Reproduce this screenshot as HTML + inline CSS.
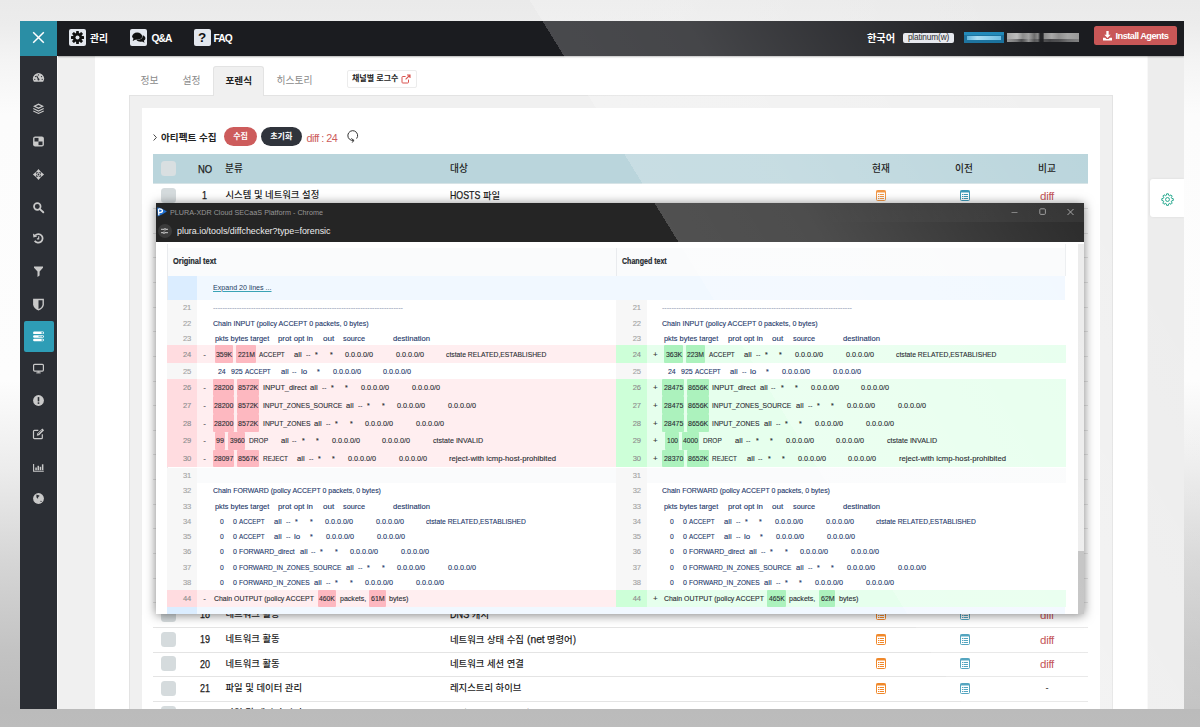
<!DOCTYPE html><html lang="ko"><head><meta charset="utf-8"><title>PLURA-XDR Cloud SECaaS Platform</title><style>
*{box-sizing:border-box;margin:0;padding:0}
html,body{width:1200px;height:727px;overflow:hidden}
body{position:relative;font-family:"Liberation Sans","Noto Sans CJK KR",sans-serif;color:#222;
 background:linear-gradient(180deg,#eaeaea 0px,#ececec 24px,#f4f4f4 60px,#fcfcfc 115px,#fdfdfd 380px,#ececec 470px,#d6d6d6 560px,#c3c3c3 650px,#bbbbbb 709px,#bcbcbc 727px);}
.l{letter-spacing:-1px;font-size:11.300px}
#app{position:absolute;left:20px;top:21px;width:1164px;height:688px;background:#fff;overflow:hidden}
#pg{position:absolute;left:-20px;top:-21px;width:1200px;height:727px}
#pg div,#pg span.a{position:absolute}
#pg span.a{transform-origin:0 50%;white-space:pre}
#pg span.a:not(.bg):not(.g):not(.hl),.row .c,.th,.tbt{z-index:10}
#gloss,#pgloss{z-index:5;left:0;top:0;width:1200px;height:727px;pointer-events:none;background:linear-gradient(58.4deg,rgba(255,255,255,0) 59.3%,rgba(255,255,255,.2) 59.3%,rgba(255,255,255,.185) 68%,rgba(255,255,255,.075) 80%,rgba(255,255,255,0) 89%)}
#gloss{position:absolute}
#pop{z-index:20}
#topbar{left:20px;top:21px;width:1164px;height:35px;background:#1b1c20;box-shadow:0 1px 1.500px rgba(0,0,0,.3)}
#teal{left:20px;top:21px;width:37px;height:35px;background:#2a8ea5}
#side{left:20px;top:56px;width:37px;height:653px;background:#2b2e34}
#strip{left:57px;top:56px;width:38px;height:653px;background:#f0f0f0}
#rstrip{left:1147px;top:56px;width:37px;height:653px;background:#ededed;border-left:1px solid #f8f8f8}
.tbi{top:29px;width:17px;height:17px;border-radius:2px;background:#e3e7ee}
.tbi svg{display:block;width:17px;height:17px}
.tbt{top:21px;height:35px;line-height:35px;color:#fff;font-weight:bold;font-size:9.8px;white-space:nowrap}
.si{left:32px;width:13px;height:13px}
.si svg{display:block;width:13px;height:13px}
#active{left:23.800px;top:321px;width:30.100px;height:30.800px;border-radius:2px;background:#2e9db6}
.tab{top:72.700px;height:16px;line-height:16px;font-size:9.8px;color:#8a8a8a;white-space:nowrap}
#tabact{left:213px;top:66px;width:51px;height:30px;background:#f0f0f0;border:1px solid #e3e3e3;border-bottom:none;border-radius:3px 3px 0 0}
#panel{left:129px;top:95px;width:984px;height:640px;background:#f0f0f0;border:1px solid #e3e3e3}
#inner{left:142px;top:108px;width:958px;height:620px;background:#fff}
#thead{left:153px;top:154px;width:935px;height:30.300px;background:#bad5dc;border-bottom:1px solid #d6e3e6}
.th{top:0;height:30px;line-height:30px;font-size:9.7px;color:#222;white-space:nowrap;font-weight:500}
.row{left:153px;width:935px;height:24.65px;border-bottom:1px solid #e4e4e4}
.row .c{top:0;height:23.6px;line-height:23.6px;font-size:9.35px;color:#1c1c1c;white-space:nowrap;font-weight:500}
.cb{left:8px;top:3.900px;width:15px;height:15px;border-radius:3.500px;background:#d5dbdd}
.di{top:5.600px;width:10px;height:11px}
.di svg{display:block}
.diff{color:#c4565a !important;top:.8px !important}

#pop{left:156px;top:203px;width:928px;height:410.7px;background:#fff;box-shadow:0 1px 10px rgba(0,0,0,.5);overflow:hidden}
#pin{left:-156px;top:-203px;width:1200px;height:727px}
#pbar{left:156px;top:203px;width:928px;height:38.7px;background:#252525}
.pt{white-space:nowrap;line-height:12px;height:12px}
#ptab{left:166.7px;top:247.5px;width:898.5px;height:400px;border-left:1px solid #e6e8eb}
#phead{left:166.7px;top:247.5px;width:898.5px;height:28.3px;background:#fafbfc}
#pexp{left:166.7px;top:275.8px;width:898.5px;height:23.9px;background:#f1f8ff}
.sd{left:0;top:0;width:0;height:0}
.r{left:0;width:1200px;font-size:8px;color:#24386a;white-space:pre;-webkit-text-stroke:.12px}
.r .a{top:.6px;height:100%}
.r .bg,.r .g,.r .hl{top:0 !important}
.r .bg{left:166.7px;width:449.4px}
.r .g{left:166.7px;width:30.6px;background:#f7f7f7}
.r .n{left:166.7px;width:24.2px;text-align:right;font-size:7.6px;color:#a3a3a3;letter-spacing:-.3px}
.r .mk{color:#333;font-size:8px}
.r.del,.r.add{color:#2a2d33}
.r.del .bg{background:#ffeef0}.r.del .g{background:#ffdce0}.r.del .hl{background:#fdb8c0}
.r.add .bg{background:#e6ffed}.r.add .g{background:#cdffd8}.r.add .hl{background:#acf2bd}
.r.emp .bg{background:#fafbfc}
.r.del .n,.r.add .n{color:#8d8d8d}
.hl{border-radius:1px}
</style></head><body>
<div id="app"><div id="pg">
<div id="strip"></div><div id="rstrip"></div>
<div id="panel"></div><div id="inner"></div><div id="tabact"></div>
<div class="tab" style="left:140.5px">정보</div>
<div class="tab" style="left:182.5px">설정</div>
<div class="tab" style="left:225.5px;color:#222;font-weight:bold;font-size:9.6px">포렌식</div>
<div class="tab" style="left:276.5px">히스토리</div>
<div style="left:347px;top:70px;width:70px;height:18px;border:1px solid #ececec;border-radius:2px;background:#fff"></div>
<div style="left:352px;top:70px;height:18px;line-height:18px;font-size:8px;font-weight:bold;color:#222;white-space:nowrap">채널별 로그수</div>
<div style="left:401px;top:74px;width:10px;height:10px"><svg viewBox="0 0 10 10" width="10" height="10" style="display:block"><path d="M7.5 5.6V8.2a.8.8 0 0 1-.8.8H1.8a.8.8 0 0 1-.8-.8V3.3a.8.8 0 0 1 .8-.8H4.6" fill="none" stroke="#d9534f" stroke-width="1"/><path d="M6 1H9V4M9 1L4.6 5.4" fill="none" stroke="#d9534f" stroke-width="1.1"/></svg></div>
<div style="left:153.300px;top:133.700px;width:4px;height:7px"><svg viewBox="0 0 4 7" width="4" height="7" style="display:block"><path d="M.6 .5L3.400 3.500 .6 6.500" fill="none" stroke="#333" stroke-width=".9"/></svg></div>
<div style="left:161px;top:128.600px;height:18px;line-height:18px;font-size:9.6px;font-weight:bold;color:#222;white-space:nowrap">아티펙트 수집</div>
<div style="left:224px;top:127px;width:33px;height:19px;border-radius:10px;background:#cd5c5c;color:#fff;font-size:8px;font-weight:bold;line-height:19px;text-align:center">수집</div>
<div style="left:261px;top:127px;width:40.500px;height:19px;border-radius:10px;background:#30343c;color:#fff;font-size:8px;font-weight:bold;line-height:19px;text-align:center">초기화</div>
<div style="left:306.5px;top:128.500px;height:18px;line-height:18px;font-size:10.800px;color:#cd5c5c;white-space:nowrap;letter-spacing:-.5px">diff : 24</div>
<div style="left:345.600px;top:129px;width:13px;height:14px"><svg viewBox="0 0 13 14" width="13" height="14" style="display:block"><path d="M7.6 11.4A4.9 4.9 0 1 1 10.6 9.6" fill="none" stroke="#333" stroke-width="1"/><path d="M5.3 9.5L8.1 11.5L5.8 13.6" fill="none" stroke="#333" stroke-width="1"/></svg></div>
<div id="thead"><div class="cb" style="top:7px;background:#d9dfe1"></div><div class="th" style="left:44.600px"><span style="display:inline-block;-webkit-text-stroke:.25px;font-size:10.80px;transform:scaleX(0.876);transform-origin:0 50%;margin-right:-2.00px;">NO</span></div><div class="th" style="left:72px">분류</div><div class="th" style="left:297px">대상</div><div class="th" style="left:719px">현재</div><div class="th" style="left:802px">이전</div><div class="th" style="left:885px">비교</div></div>
<div class="row" style="top:184.3px"><div class="cb"></div><div class="c" style="left:49.20px"><span style="display:inline-block;-webkit-text-stroke:.25px;font-size:10.50px;transform:scaleX(0.856);transform-origin:0 50%;margin-right:-0.84px;">1</span></div><div class="c" style="left:72.5px">시스템 및 네트워크 설정</div><div class="c" style="left:297px"><span style="display:inline-block;-webkit-text-stroke:.25px;font-size:10.80px;transform:scaleX(0.814);transform-origin:0 50%;margin-right:-6.90px;">HOSTS</span> 파일</div><div class="di" style="left:723.200px"><svg viewBox="0 0 10 11" width="10" height="11"><rect x=".5" y=".5" width="9" height="10" rx="1" fill="#fff" stroke="#f0882a" stroke-width="1"/><rect x=".5" y=".5" width="9" height="2" fill="#f0882a"/><path d="M2 4.500H8M2 6.500H8M2 8.500H8" stroke="#f0882a" stroke-width="1"/><path d="M3.500 3V10" stroke="#fff" stroke-width=".7" opacity=".8"/></svg></div><div class="di" style="left:806.700px"><svg viewBox="0 0 10 11" width="10" height="11"><rect x=".5" y=".5" width="9" height="10" rx="1" fill="#fff" stroke="#2b8fb0" stroke-width="1"/><rect x=".5" y=".5" width="9" height="2" fill="#2b8fb0"/><path d="M2 4.500H8M2 6.500H8M2 8.500H8" stroke="#2b8fb0" stroke-width="1"/><path d="M3.500 3V10" stroke="#fff" stroke-width=".7" opacity=".8"/></svg></div><div class="c diff" style="left:856px;width:76px;text-align:center;font-size:11.5px;letter-spacing:-.3px">diff</div></div>
<div class="row" style="top:209.0px"><div class="cb"></div><div class="c" style="left:49.20px"><span style="display:inline-block;-webkit-text-stroke:.25px;font-size:10.50px;transform:scaleX(0.856);transform-origin:0 50%;margin-right:-0.84px;">2</span></div><div class="di" style="left:723.200px"><svg viewBox="0 0 10 11" width="10" height="11"><rect x=".5" y=".5" width="9" height="10" rx="1" fill="#fff" stroke="#f0882a" stroke-width="1"/><rect x=".5" y=".5" width="9" height="2" fill="#f0882a"/><path d="M2 4.500H8M2 6.500H8M2 8.500H8" stroke="#f0882a" stroke-width="1"/><path d="M3.500 3V10" stroke="#fff" stroke-width=".7" opacity=".8"/></svg></div><div class="di" style="left:806.700px"><svg viewBox="0 0 10 11" width="10" height="11"><rect x=".5" y=".5" width="9" height="10" rx="1" fill="#fff" stroke="#2b8fb0" stroke-width="1"/><rect x=".5" y=".5" width="9" height="2" fill="#2b8fb0"/><path d="M2 4.500H8M2 6.500H8M2 8.500H8" stroke="#2b8fb0" stroke-width="1"/><path d="M3.500 3V10" stroke="#fff" stroke-width=".7" opacity=".8"/></svg></div><div class="c diff" style="left:856px;width:76px;text-align:center;font-size:11.5px;letter-spacing:-.3px">diff</div></div>
<div class="row" style="top:233.6px"><div class="cb"></div><div class="c" style="left:49.20px"><span style="display:inline-block;-webkit-text-stroke:.25px;font-size:10.50px;transform:scaleX(0.856);transform-origin:0 50%;margin-right:-0.84px;">3</span></div><div class="di" style="left:723.200px"><svg viewBox="0 0 10 11" width="10" height="11"><rect x=".5" y=".5" width="9" height="10" rx="1" fill="#fff" stroke="#f0882a" stroke-width="1"/><rect x=".5" y=".5" width="9" height="2" fill="#f0882a"/><path d="M2 4.500H8M2 6.500H8M2 8.500H8" stroke="#f0882a" stroke-width="1"/><path d="M3.500 3V10" stroke="#fff" stroke-width=".7" opacity=".8"/></svg></div><div class="di" style="left:806.700px"><svg viewBox="0 0 10 11" width="10" height="11"><rect x=".5" y=".5" width="9" height="10" rx="1" fill="#fff" stroke="#2b8fb0" stroke-width="1"/><rect x=".5" y=".5" width="9" height="2" fill="#2b8fb0"/><path d="M2 4.500H8M2 6.500H8M2 8.500H8" stroke="#2b8fb0" stroke-width="1"/><path d="M3.500 3V10" stroke="#fff" stroke-width=".7" opacity=".8"/></svg></div><div class="c diff" style="left:856px;width:76px;text-align:center;font-size:11.5px;letter-spacing:-.3px">diff</div></div>
<div class="row" style="top:258.2px"><div class="cb"></div><div class="c" style="left:49.20px"><span style="display:inline-block;-webkit-text-stroke:.25px;font-size:10.50px;transform:scaleX(0.856);transform-origin:0 50%;margin-right:-0.84px;">4</span></div><div class="di" style="left:723.200px"><svg viewBox="0 0 10 11" width="10" height="11"><rect x=".5" y=".5" width="9" height="10" rx="1" fill="#fff" stroke="#f0882a" stroke-width="1"/><rect x=".5" y=".5" width="9" height="2" fill="#f0882a"/><path d="M2 4.500H8M2 6.500H8M2 8.500H8" stroke="#f0882a" stroke-width="1"/><path d="M3.500 3V10" stroke="#fff" stroke-width=".7" opacity=".8"/></svg></div><div class="di" style="left:806.700px"><svg viewBox="0 0 10 11" width="10" height="11"><rect x=".5" y=".5" width="9" height="10" rx="1" fill="#fff" stroke="#2b8fb0" stroke-width="1"/><rect x=".5" y=".5" width="9" height="2" fill="#2b8fb0"/><path d="M2 4.500H8M2 6.500H8M2 8.500H8" stroke="#2b8fb0" stroke-width="1"/><path d="M3.500 3V10" stroke="#fff" stroke-width=".7" opacity=".8"/></svg></div><div class="c diff" style="left:856px;width:76px;text-align:center;font-size:11.5px;letter-spacing:-.3px">diff</div></div>
<div class="row" style="top:282.9px"><div class="cb"></div><div class="c" style="left:49.20px"><span style="display:inline-block;-webkit-text-stroke:.25px;font-size:10.50px;transform:scaleX(0.856);transform-origin:0 50%;margin-right:-0.84px;">5</span></div><div class="di" style="left:723.200px"><svg viewBox="0 0 10 11" width="10" height="11"><rect x=".5" y=".5" width="9" height="10" rx="1" fill="#fff" stroke="#f0882a" stroke-width="1"/><rect x=".5" y=".5" width="9" height="2" fill="#f0882a"/><path d="M2 4.500H8M2 6.500H8M2 8.500H8" stroke="#f0882a" stroke-width="1"/><path d="M3.500 3V10" stroke="#fff" stroke-width=".7" opacity=".8"/></svg></div><div class="di" style="left:806.700px"><svg viewBox="0 0 10 11" width="10" height="11"><rect x=".5" y=".5" width="9" height="10" rx="1" fill="#fff" stroke="#2b8fb0" stroke-width="1"/><rect x=".5" y=".5" width="9" height="2" fill="#2b8fb0"/><path d="M2 4.500H8M2 6.500H8M2 8.500H8" stroke="#2b8fb0" stroke-width="1"/><path d="M3.500 3V10" stroke="#fff" stroke-width=".7" opacity=".8"/></svg></div><div class="c diff" style="left:856px;width:76px;text-align:center;font-size:11.5px;letter-spacing:-.3px">diff</div></div>
<div class="row" style="top:307.6px"><div class="cb"></div><div class="c" style="left:49.20px"><span style="display:inline-block;-webkit-text-stroke:.25px;font-size:10.50px;transform:scaleX(0.856);transform-origin:0 50%;margin-right:-0.84px;">6</span></div><div class="di" style="left:723.200px"><svg viewBox="0 0 10 11" width="10" height="11"><rect x=".5" y=".5" width="9" height="10" rx="1" fill="#fff" stroke="#f0882a" stroke-width="1"/><rect x=".5" y=".5" width="9" height="2" fill="#f0882a"/><path d="M2 4.500H8M2 6.500H8M2 8.500H8" stroke="#f0882a" stroke-width="1"/><path d="M3.500 3V10" stroke="#fff" stroke-width=".7" opacity=".8"/></svg></div><div class="di" style="left:806.700px"><svg viewBox="0 0 10 11" width="10" height="11"><rect x=".5" y=".5" width="9" height="10" rx="1" fill="#fff" stroke="#2b8fb0" stroke-width="1"/><rect x=".5" y=".5" width="9" height="2" fill="#2b8fb0"/><path d="M2 4.500H8M2 6.500H8M2 8.500H8" stroke="#2b8fb0" stroke-width="1"/><path d="M3.500 3V10" stroke="#fff" stroke-width=".7" opacity=".8"/></svg></div><div class="c diff" style="left:856px;width:76px;text-align:center;font-size:11.5px;letter-spacing:-.3px">diff</div></div>
<div class="row" style="top:332.2px"><div class="cb"></div><div class="c" style="left:49.20px"><span style="display:inline-block;-webkit-text-stroke:.25px;font-size:10.50px;transform:scaleX(0.856);transform-origin:0 50%;margin-right:-0.84px;">7</span></div><div class="di" style="left:723.200px"><svg viewBox="0 0 10 11" width="10" height="11"><rect x=".5" y=".5" width="9" height="10" rx="1" fill="#fff" stroke="#f0882a" stroke-width="1"/><rect x=".5" y=".5" width="9" height="2" fill="#f0882a"/><path d="M2 4.500H8M2 6.500H8M2 8.500H8" stroke="#f0882a" stroke-width="1"/><path d="M3.500 3V10" stroke="#fff" stroke-width=".7" opacity=".8"/></svg></div><div class="di" style="left:806.700px"><svg viewBox="0 0 10 11" width="10" height="11"><rect x=".5" y=".5" width="9" height="10" rx="1" fill="#fff" stroke="#2b8fb0" stroke-width="1"/><rect x=".5" y=".5" width="9" height="2" fill="#2b8fb0"/><path d="M2 4.500H8M2 6.500H8M2 8.500H8" stroke="#2b8fb0" stroke-width="1"/><path d="M3.500 3V10" stroke="#fff" stroke-width=".7" opacity=".8"/></svg></div><div class="c diff" style="left:856px;width:76px;text-align:center;font-size:11.5px;letter-spacing:-.3px">diff</div></div>
<div class="row" style="top:356.9px"><div class="cb"></div><div class="c" style="left:49.20px"><span style="display:inline-block;-webkit-text-stroke:.25px;font-size:10.50px;transform:scaleX(0.856);transform-origin:0 50%;margin-right:-0.84px;">8</span></div><div class="di" style="left:723.200px"><svg viewBox="0 0 10 11" width="10" height="11"><rect x=".5" y=".5" width="9" height="10" rx="1" fill="#fff" stroke="#f0882a" stroke-width="1"/><rect x=".5" y=".5" width="9" height="2" fill="#f0882a"/><path d="M2 4.500H8M2 6.500H8M2 8.500H8" stroke="#f0882a" stroke-width="1"/><path d="M3.500 3V10" stroke="#fff" stroke-width=".7" opacity=".8"/></svg></div><div class="di" style="left:806.700px"><svg viewBox="0 0 10 11" width="10" height="11"><rect x=".5" y=".5" width="9" height="10" rx="1" fill="#fff" stroke="#2b8fb0" stroke-width="1"/><rect x=".5" y=".5" width="9" height="2" fill="#2b8fb0"/><path d="M2 4.500H8M2 6.500H8M2 8.500H8" stroke="#2b8fb0" stroke-width="1"/><path d="M3.500 3V10" stroke="#fff" stroke-width=".7" opacity=".8"/></svg></div><div class="c diff" style="left:856px;width:76px;text-align:center;font-size:11.5px;letter-spacing:-.3px">diff</div></div>
<div class="row" style="top:381.5px"><div class="cb"></div><div class="c" style="left:49.20px"><span style="display:inline-block;-webkit-text-stroke:.25px;font-size:10.50px;transform:scaleX(0.856);transform-origin:0 50%;margin-right:-0.84px;">9</span></div><div class="di" style="left:723.200px"><svg viewBox="0 0 10 11" width="10" height="11"><rect x=".5" y=".5" width="9" height="10" rx="1" fill="#fff" stroke="#f0882a" stroke-width="1"/><rect x=".5" y=".5" width="9" height="2" fill="#f0882a"/><path d="M2 4.500H8M2 6.500H8M2 8.500H8" stroke="#f0882a" stroke-width="1"/><path d="M3.500 3V10" stroke="#fff" stroke-width=".7" opacity=".8"/></svg></div><div class="di" style="left:806.700px"><svg viewBox="0 0 10 11" width="10" height="11"><rect x=".5" y=".5" width="9" height="10" rx="1" fill="#fff" stroke="#2b8fb0" stroke-width="1"/><rect x=".5" y=".5" width="9" height="2" fill="#2b8fb0"/><path d="M2 4.500H8M2 6.500H8M2 8.500H8" stroke="#2b8fb0" stroke-width="1"/><path d="M3.500 3V10" stroke="#fff" stroke-width=".7" opacity=".8"/></svg></div><div class="c diff" style="left:856px;width:76px;text-align:center;font-size:11.5px;letter-spacing:-.3px">diff</div></div>
<div class="row" style="top:406.1px"><div class="cb"></div><div class="c" style="left:46.70px"><span style="display:inline-block;-webkit-text-stroke:.25px;font-size:10.50px;transform:scaleX(0.856);transform-origin:0 50%;margin-right:-1.69px;">10</span></div><div class="di" style="left:723.200px"><svg viewBox="0 0 10 11" width="10" height="11"><rect x=".5" y=".5" width="9" height="10" rx="1" fill="#fff" stroke="#f0882a" stroke-width="1"/><rect x=".5" y=".5" width="9" height="2" fill="#f0882a"/><path d="M2 4.500H8M2 6.500H8M2 8.500H8" stroke="#f0882a" stroke-width="1"/><path d="M3.500 3V10" stroke="#fff" stroke-width=".7" opacity=".8"/></svg></div><div class="di" style="left:806.700px"><svg viewBox="0 0 10 11" width="10" height="11"><rect x=".5" y=".5" width="9" height="10" rx="1" fill="#fff" stroke="#2b8fb0" stroke-width="1"/><rect x=".5" y=".5" width="9" height="2" fill="#2b8fb0"/><path d="M2 4.500H8M2 6.500H8M2 8.500H8" stroke="#2b8fb0" stroke-width="1"/><path d="M3.500 3V10" stroke="#fff" stroke-width=".7" opacity=".8"/></svg></div><div class="c diff" style="left:856px;width:76px;text-align:center;font-size:11.5px;letter-spacing:-.3px">diff</div></div>
<div class="row" style="top:430.8px"><div class="cb"></div><div class="c" style="left:46.70px"><span style="display:inline-block;-webkit-text-stroke:.25px;font-size:10.50px;transform:scaleX(0.917);transform-origin:0 50%;margin-right:-0.91px;">11</span></div><div class="di" style="left:723.200px"><svg viewBox="0 0 10 11" width="10" height="11"><rect x=".5" y=".5" width="9" height="10" rx="1" fill="#fff" stroke="#f0882a" stroke-width="1"/><rect x=".5" y=".5" width="9" height="2" fill="#f0882a"/><path d="M2 4.500H8M2 6.500H8M2 8.500H8" stroke="#f0882a" stroke-width="1"/><path d="M3.500 3V10" stroke="#fff" stroke-width=".7" opacity=".8"/></svg></div><div class="di" style="left:806.700px"><svg viewBox="0 0 10 11" width="10" height="11"><rect x=".5" y=".5" width="9" height="10" rx="1" fill="#fff" stroke="#2b8fb0" stroke-width="1"/><rect x=".5" y=".5" width="9" height="2" fill="#2b8fb0"/><path d="M2 4.500H8M2 6.500H8M2 8.500H8" stroke="#2b8fb0" stroke-width="1"/><path d="M3.500 3V10" stroke="#fff" stroke-width=".7" opacity=".8"/></svg></div><div class="c diff" style="left:856px;width:76px;text-align:center;font-size:11.5px;letter-spacing:-.3px">diff</div></div>
<div class="row" style="top:455.4px"><div class="cb"></div><div class="c" style="left:46.70px"><span style="display:inline-block;-webkit-text-stroke:.25px;font-size:10.50px;transform:scaleX(0.856);transform-origin:0 50%;margin-right:-1.69px;">12</span></div><div class="di" style="left:723.200px"><svg viewBox="0 0 10 11" width="10" height="11"><rect x=".5" y=".5" width="9" height="10" rx="1" fill="#fff" stroke="#f0882a" stroke-width="1"/><rect x=".5" y=".5" width="9" height="2" fill="#f0882a"/><path d="M2 4.500H8M2 6.500H8M2 8.500H8" stroke="#f0882a" stroke-width="1"/><path d="M3.500 3V10" stroke="#fff" stroke-width=".7" opacity=".8"/></svg></div><div class="di" style="left:806.700px"><svg viewBox="0 0 10 11" width="10" height="11"><rect x=".5" y=".5" width="9" height="10" rx="1" fill="#fff" stroke="#2b8fb0" stroke-width="1"/><rect x=".5" y=".5" width="9" height="2" fill="#2b8fb0"/><path d="M2 4.500H8M2 6.500H8M2 8.500H8" stroke="#2b8fb0" stroke-width="1"/><path d="M3.500 3V10" stroke="#fff" stroke-width=".7" opacity=".8"/></svg></div><div class="c diff" style="left:856px;width:76px;text-align:center;font-size:11.5px;letter-spacing:-.3px">diff</div></div>
<div class="row" style="top:480.1px"><div class="cb"></div><div class="c" style="left:46.70px"><span style="display:inline-block;-webkit-text-stroke:.25px;font-size:10.50px;transform:scaleX(0.856);transform-origin:0 50%;margin-right:-1.69px;">13</span></div><div class="di" style="left:723.200px"><svg viewBox="0 0 10 11" width="10" height="11"><rect x=".5" y=".5" width="9" height="10" rx="1" fill="#fff" stroke="#f0882a" stroke-width="1"/><rect x=".5" y=".5" width="9" height="2" fill="#f0882a"/><path d="M2 4.500H8M2 6.500H8M2 8.500H8" stroke="#f0882a" stroke-width="1"/><path d="M3.500 3V10" stroke="#fff" stroke-width=".7" opacity=".8"/></svg></div><div class="di" style="left:806.700px"><svg viewBox="0 0 10 11" width="10" height="11"><rect x=".5" y=".5" width="9" height="10" rx="1" fill="#fff" stroke="#2b8fb0" stroke-width="1"/><rect x=".5" y=".5" width="9" height="2" fill="#2b8fb0"/><path d="M2 4.500H8M2 6.500H8M2 8.500H8" stroke="#2b8fb0" stroke-width="1"/><path d="M3.500 3V10" stroke="#fff" stroke-width=".7" opacity=".8"/></svg></div><div class="c diff" style="left:856px;width:76px;text-align:center;font-size:11.5px;letter-spacing:-.3px">diff</div></div>
<div class="row" style="top:504.8px"><div class="cb"></div><div class="c" style="left:46.70px"><span style="display:inline-block;-webkit-text-stroke:.25px;font-size:10.50px;transform:scaleX(0.856);transform-origin:0 50%;margin-right:-1.69px;">14</span></div><div class="di" style="left:723.200px"><svg viewBox="0 0 10 11" width="10" height="11"><rect x=".5" y=".5" width="9" height="10" rx="1" fill="#fff" stroke="#f0882a" stroke-width="1"/><rect x=".5" y=".5" width="9" height="2" fill="#f0882a"/><path d="M2 4.500H8M2 6.500H8M2 8.500H8" stroke="#f0882a" stroke-width="1"/><path d="M3.500 3V10" stroke="#fff" stroke-width=".7" opacity=".8"/></svg></div><div class="di" style="left:806.700px"><svg viewBox="0 0 10 11" width="10" height="11"><rect x=".5" y=".5" width="9" height="10" rx="1" fill="#fff" stroke="#2b8fb0" stroke-width="1"/><rect x=".5" y=".5" width="9" height="2" fill="#2b8fb0"/><path d="M2 4.500H8M2 6.500H8M2 8.500H8" stroke="#2b8fb0" stroke-width="1"/><path d="M3.500 3V10" stroke="#fff" stroke-width=".7" opacity=".8"/></svg></div><div class="c diff" style="left:856px;width:76px;text-align:center;font-size:11.5px;letter-spacing:-.3px">diff</div></div>
<div class="row" style="top:529.4px"><div class="cb"></div><div class="c" style="left:46.70px"><span style="display:inline-block;-webkit-text-stroke:.25px;font-size:10.50px;transform:scaleX(0.856);transform-origin:0 50%;margin-right:-1.69px;">15</span></div><div class="di" style="left:723.200px"><svg viewBox="0 0 10 11" width="10" height="11"><rect x=".5" y=".5" width="9" height="10" rx="1" fill="#fff" stroke="#f0882a" stroke-width="1"/><rect x=".5" y=".5" width="9" height="2" fill="#f0882a"/><path d="M2 4.500H8M2 6.500H8M2 8.500H8" stroke="#f0882a" stroke-width="1"/><path d="M3.500 3V10" stroke="#fff" stroke-width=".7" opacity=".8"/></svg></div><div class="di" style="left:806.700px"><svg viewBox="0 0 10 11" width="10" height="11"><rect x=".5" y=".5" width="9" height="10" rx="1" fill="#fff" stroke="#2b8fb0" stroke-width="1"/><rect x=".5" y=".5" width="9" height="2" fill="#2b8fb0"/><path d="M2 4.500H8M2 6.500H8M2 8.500H8" stroke="#2b8fb0" stroke-width="1"/><path d="M3.500 3V10" stroke="#fff" stroke-width=".7" opacity=".8"/></svg></div><div class="c diff" style="left:856px;width:76px;text-align:center;font-size:11.5px;letter-spacing:-.3px">diff</div></div>
<div class="row" style="top:554.0px"><div class="cb"></div><div class="c" style="left:46.70px"><span style="display:inline-block;-webkit-text-stroke:.25px;font-size:10.50px;transform:scaleX(0.856);transform-origin:0 50%;margin-right:-1.69px;">16</span></div><div class="di" style="left:723.200px"><svg viewBox="0 0 10 11" width="10" height="11"><rect x=".5" y=".5" width="9" height="10" rx="1" fill="#fff" stroke="#f0882a" stroke-width="1"/><rect x=".5" y=".5" width="9" height="2" fill="#f0882a"/><path d="M2 4.500H8M2 6.500H8M2 8.500H8" stroke="#f0882a" stroke-width="1"/><path d="M3.500 3V10" stroke="#fff" stroke-width=".7" opacity=".8"/></svg></div><div class="di" style="left:806.700px"><svg viewBox="0 0 10 11" width="10" height="11"><rect x=".5" y=".5" width="9" height="10" rx="1" fill="#fff" stroke="#2b8fb0" stroke-width="1"/><rect x=".5" y=".5" width="9" height="2" fill="#2b8fb0"/><path d="M2 4.500H8M2 6.500H8M2 8.500H8" stroke="#2b8fb0" stroke-width="1"/><path d="M3.500 3V10" stroke="#fff" stroke-width=".7" opacity=".8"/></svg></div><div class="c diff" style="left:856px;width:76px;text-align:center;font-size:11.5px;letter-spacing:-.3px">diff</div></div>
<div class="row" style="top:578.7px"><div class="cb"></div><div class="c" style="left:46.70px"><span style="display:inline-block;-webkit-text-stroke:.25px;font-size:10.50px;transform:scaleX(0.856);transform-origin:0 50%;margin-right:-1.69px;">17</span></div><div class="di" style="left:723.200px"><svg viewBox="0 0 10 11" width="10" height="11"><rect x=".5" y=".5" width="9" height="10" rx="1" fill="#fff" stroke="#f0882a" stroke-width="1"/><rect x=".5" y=".5" width="9" height="2" fill="#f0882a"/><path d="M2 4.500H8M2 6.500H8M2 8.500H8" stroke="#f0882a" stroke-width="1"/><path d="M3.500 3V10" stroke="#fff" stroke-width=".7" opacity=".8"/></svg></div><div class="di" style="left:806.700px"><svg viewBox="0 0 10 11" width="10" height="11"><rect x=".5" y=".5" width="9" height="10" rx="1" fill="#fff" stroke="#2b8fb0" stroke-width="1"/><rect x=".5" y=".5" width="9" height="2" fill="#2b8fb0"/><path d="M2 4.500H8M2 6.500H8M2 8.500H8" stroke="#2b8fb0" stroke-width="1"/><path d="M3.500 3V10" stroke="#fff" stroke-width=".7" opacity=".8"/></svg></div><div class="c diff" style="left:856px;width:76px;text-align:center;font-size:11.5px;letter-spacing:-.3px">diff</div></div>
<div class="row" style="top:603.3px"><div class="cb"></div><div class="c" style="left:46.70px"><span style="display:inline-block;-webkit-text-stroke:.25px;font-size:10.50px;transform:scaleX(0.856);transform-origin:0 50%;margin-right:-1.69px;">18</span></div><div class="c" style="left:72.5px">네트워크 활동</div><div class="c" style="left:297px"><span style="display:inline-block;-webkit-text-stroke:.25px;font-size:10.80px;transform:scaleX(0.842);transform-origin:0 50%;margin-right:-3.60px;">DNS</span> 캐시</div><div class="di" style="left:723.200px"><svg viewBox="0 0 10 11" width="10" height="11"><rect x=".5" y=".5" width="9" height="10" rx="1" fill="#fff" stroke="#f0882a" stroke-width="1"/><rect x=".5" y=".5" width="9" height="2" fill="#f0882a"/><path d="M2 4.500H8M2 6.500H8M2 8.500H8" stroke="#f0882a" stroke-width="1"/><path d="M3.500 3V10" stroke="#fff" stroke-width=".7" opacity=".8"/></svg></div><div class="di" style="left:806.700px"><svg viewBox="0 0 10 11" width="10" height="11"><rect x=".5" y=".5" width="9" height="10" rx="1" fill="#fff" stroke="#2b8fb0" stroke-width="1"/><rect x=".5" y=".5" width="9" height="2" fill="#2b8fb0"/><path d="M2 4.500H8M2 6.500H8M2 8.500H8" stroke="#2b8fb0" stroke-width="1"/><path d="M3.500 3V10" stroke="#fff" stroke-width=".7" opacity=".8"/></svg></div><div class="c diff" style="left:856px;width:76px;text-align:center;font-size:11.5px;letter-spacing:-.3px">diff</div></div>
<div class="row" style="top:628.0px"><div class="cb"></div><div class="c" style="left:46.70px"><span style="display:inline-block;-webkit-text-stroke:.25px;font-size:10.50px;transform:scaleX(0.856);transform-origin:0 50%;margin-right:-1.69px;">19</span></div><div class="c" style="left:72.5px">네트워크 활동</div><div class="c" style="left:297px">네트워크 상태 수집 <span style="display:inline-block;-webkit-text-stroke:.25px;font-size:10.80px;transform:scaleX(0.951);transform-origin:0 50%;margin-right:-0.91px;">(net</span> 명령어<span style="display:inline-block;-webkit-text-stroke:.25px;font-size:10.80px;transform:scaleX(0.831);transform-origin:0 50%;margin-right:-0.61px;">)</span></div><div class="di" style="left:723.200px"><svg viewBox="0 0 10 11" width="10" height="11"><rect x=".5" y=".5" width="9" height="10" rx="1" fill="#fff" stroke="#f0882a" stroke-width="1"/><rect x=".5" y=".5" width="9" height="2" fill="#f0882a"/><path d="M2 4.500H8M2 6.500H8M2 8.500H8" stroke="#f0882a" stroke-width="1"/><path d="M3.500 3V10" stroke="#fff" stroke-width=".7" opacity=".8"/></svg></div><div class="di" style="left:806.700px"><svg viewBox="0 0 10 11" width="10" height="11"><rect x=".5" y=".5" width="9" height="10" rx="1" fill="#fff" stroke="#2b8fb0" stroke-width="1"/><rect x=".5" y=".5" width="9" height="2" fill="#2b8fb0"/><path d="M2 4.500H8M2 6.500H8M2 8.500H8" stroke="#2b8fb0" stroke-width="1"/><path d="M3.500 3V10" stroke="#fff" stroke-width=".7" opacity=".8"/></svg></div><div class="c diff" style="left:856px;width:76px;text-align:center;font-size:11.5px;letter-spacing:-.3px">diff</div></div>
<div class="row" style="top:652.6px"><div class="cb"></div><div class="c" style="left:46.70px"><span style="display:inline-block;-webkit-text-stroke:.25px;font-size:10.50px;transform:scaleX(0.856);transform-origin:0 50%;margin-right:-1.69px;">20</span></div><div class="c" style="left:72.5px">네트워크 활동</div><div class="c" style="left:297px">네트워크 세션 연결</div><div class="di" style="left:723.200px"><svg viewBox="0 0 10 11" width="10" height="11"><rect x=".5" y=".5" width="9" height="10" rx="1" fill="#fff" stroke="#f0882a" stroke-width="1"/><rect x=".5" y=".5" width="9" height="2" fill="#f0882a"/><path d="M2 4.500H8M2 6.500H8M2 8.500H8" stroke="#f0882a" stroke-width="1"/><path d="M3.500 3V10" stroke="#fff" stroke-width=".7" opacity=".8"/></svg></div><div class="di" style="left:806.700px"><svg viewBox="0 0 10 11" width="10" height="11"><rect x=".5" y=".5" width="9" height="10" rx="1" fill="#fff" stroke="#2b8fb0" stroke-width="1"/><rect x=".5" y=".5" width="9" height="2" fill="#2b8fb0"/><path d="M2 4.500H8M2 6.500H8M2 8.500H8" stroke="#2b8fb0" stroke-width="1"/><path d="M3.500 3V10" stroke="#fff" stroke-width=".7" opacity=".8"/></svg></div><div class="c diff" style="left:856px;width:76px;text-align:center;font-size:11.5px;letter-spacing:-.3px">diff</div></div>
<div class="row" style="top:677.3px"><div class="cb"></div><div class="c" style="left:46.70px"><span style="display:inline-block;-webkit-text-stroke:.25px;font-size:10.50px;transform:scaleX(0.856);transform-origin:0 50%;margin-right:-1.69px;">21</span></div><div class="c" style="left:72.5px">파일 및 데이터 관리</div><div class="c" style="left:297px">레지스트리 하이브</div><div class="di" style="left:723.200px"><svg viewBox="0 0 10 11" width="10" height="11"><rect x=".5" y=".5" width="9" height="10" rx="1" fill="#fff" stroke="#f0882a" stroke-width="1"/><rect x=".5" y=".5" width="9" height="2" fill="#f0882a"/><path d="M2 4.500H8M2 6.500H8M2 8.500H8" stroke="#f0882a" stroke-width="1"/><path d="M3.500 3V10" stroke="#fff" stroke-width=".7" opacity=".8"/></svg></div><div class="di" style="left:806.700px"><svg viewBox="0 0 10 11" width="10" height="11"><rect x=".5" y=".5" width="9" height="10" rx="1" fill="#fff" stroke="#2b8fb0" stroke-width="1"/><rect x=".5" y=".5" width="9" height="2" fill="#2b8fb0"/><path d="M2 4.500H8M2 6.500H8M2 8.500H8" stroke="#2b8fb0" stroke-width="1"/><path d="M3.500 3V10" stroke="#fff" stroke-width=".7" opacity=".8"/></svg></div><div class="c" style="left:856px;width:76px;text-align:center">-</div></div>
<div class="row" style="top:702.0px"><div class="cb"></div><div class="c" style="left:46.70px"><span style="display:inline-block;-webkit-text-stroke:.25px;font-size:10.50px;transform:scaleX(0.856);transform-origin:0 50%;margin-right:-1.69px;">22</span></div><div class="c" style="left:72.5px">파일 및 데이터 관리</div><div class="c" style="left:297px">수정 파일 분석 <span style="display:inline-block;-webkit-text-stroke:.25px;font-size:10.80px;transform:scaleX(0.831);transform-origin:0 50%;margin-right:-0.61px;">(</span>특정 폴더<span style="display:inline-block;-webkit-text-stroke:.25px;font-size:10.80px;transform:scaleX(0.831);transform-origin:0 50%;margin-right:-0.61px;">)</span></div><div class="c" style="left:856px;width:76px;text-align:center">-</div></div>
<div style="left:1150px;top:179px;width:34px;height:38px;background:#fff;border-radius:3px 0 0 3px;box-shadow:0 0 3px rgba(0,0,0,.08)"></div>
<div style="left:1161.200px;top:192.800px;width:13px;height:13px"><svg viewBox="0 0 16 16" width="13" height="13" style="display:block"><path d="M6.9 1h2.2l.4 1.9 1.2.5 1.6-1.1 1.5 1.5-1.1 1.6.5 1.2 1.9.4v2.2l-1.9.4-.5 1.2 1.1 1.6-1.5 1.5-1.6-1.1-1.2.5-.4 1.9H6.9l-.4-1.9-1.2-.5-1.6 1.1-1.5-1.5 1.1-1.6-.5-1.2L1 9.100V6.900l1.900-.4.5-1.2-1.100-1.600 1.500-1.500 1.600 1.100 1.200-.5z" fill="none" stroke="#1fa58a" stroke-width="1.2" stroke-linejoin="round"/><circle cx="8" cy="8" r="2.4" fill="none" stroke="#1fa58a" stroke-width="1.2"/></svg></div>
<div id="topbar"></div><div id="teal"></div><div id="side"></div><div style="left:57px;top:56px;width:1px;height:653px;background:#fafafa"></div>
<div style="left:32px;top:31.300px;width:13px;height:13px"><svg viewBox="0 0 13 13" width="13" height="13" style="display:block"><path d="M1.200 1.200L11.800 11.800M11.800 1.200L1.200 11.800" stroke="#fff" stroke-width="1.5"/></svg></div>
<div class="tbi" style="left:69px"><svg viewBox="0 0 17 17"><g fill="#111"><circle cx="8.500" cy="8.500" r="4.600"/><rect x="7.1" y="2" width="2.800" height="13" rx=".5" transform="rotate(0 8.500 8.500)"/><rect x="7.1" y="2" width="2.800" height="13" rx=".5" transform="rotate(45 8.500 8.500)"/><rect x="7.1" y="2" width="2.800" height="13" rx=".5" transform="rotate(90 8.500 8.500)"/><rect x="7.1" y="2" width="2.800" height="13" rx=".5" transform="rotate(135 8.500 8.500)"/></g><circle cx="8.500" cy="8.500" r="2" fill="#e3e7ee"/></svg></div>
<div class="tbt" style="left:90px">관리</div>
<div class="tbi" style="left:130px"><svg viewBox="0 0 17 17"><ellipse cx="7.200" cy="7.200" rx="5" ry="3.600" fill="#111"/><path d="M3.600 9.200L2.600 12L6.200 10.300z" fill="#111"/><path d="M12.800 6.300c1.600.6 2.600 1.700 2.600 3 0 1-.6 1.900-1.600 2.500l.8 2-2.600-1.300c-.5.100-1 .2-1.500.2-1.700 0-3.200-.6-4-1.600 3.500.2 6.600-1.800 6.300-4.800z" fill="#111"/></svg></div>
<div class="tbt" style="left:151.5px;letter-spacing:-.9px;font-size:10.2px">Q&amp;A</div>
<div class="tbi" style="left:193.5px"></div>
<div class="tbt" style="left:193.5px;width:17px;text-align:center;color:#111;font-size:13.500px;top:19.600px">?</div>
<div class="tbt" style="left:213.5px;letter-spacing:-.9px;font-size:10.2px">FAQ</div>
<div class="tbt" style="left:867px;font-size:10.2px">한국어</div>
<div style="left:903px;top:33px;width:51px;height:9.5px;border-radius:2px;background:#e6e8ee;color:#222;font-size:8.3px;line-height:9.5px;text-align:center;letter-spacing:-.15px;white-space:nowrap">platinum(w)</div>
<div style="left:964px;top:32px;width:40px;height:11px;background:#166f9c"></div>
<div style="left:964px;top:32px;width:40px;height:3px;background:#1c87b8"></div>
<div style="left:967px;top:35.500px;width:34px;height:4px;background:linear-gradient(90deg,#5fb4dc,#a8dcf2 30%,#8fd0ec 60%,#6cbde2)"></div>
<div style="left:1007px;top:33px;width:72px;height:9px;background:linear-gradient(90deg,#a5a5a5 0,#bcbcbc 14%,#8a8a8a 22%,#a2a2a2 30%,#6c6c6c 38%,#8e8e8e 43%,#232427 46%,#232427 50%,#8c8c8c 52%,#a8a8a8 62%,#8f8f8f 72%,#a6a6a6 84%,#9a9a9a 100%)"></div>
<div style="left:1007px;top:39px;width:72px;height:3px;background:linear-gradient(90deg,rgba(27,28,32,.1) 0,rgba(27,28,32,.6) 20%,rgba(27,28,32,.1) 30%,rgba(27,28,32,.7) 60%,rgba(27,28,32,.2) 100%)"></div>
<div style="left:1094px;top:26px;width:82.5px;height:19px;border-radius:2.500px;background:#c95757"></div>
<div style="left:1103px;top:31px;width:9px;height:10px"><svg viewBox="0 0 10 11" width="9" height="10" style="display:block"><path d="M3.700 0h2.600v4h2.200L5 7.600 1.500 4h2.200z" fill="#fff"/><path d="M0 7.500h2.500l1.300 1.300h2.400l1.300-1.300H10v3H0z" fill="#fff"/></svg></div>
<div style="left:1115.500px;top:26.800px;height:19px;line-height:19px;color:#fff;font-weight:bold;font-size:9.3px;letter-spacing:-.55px;white-space:nowrap">Install Agents</div>
<div id="active"></div>
<div class="si" style="top:71.1px"><svg viewBox="0 0 13 13"><path d="M1.900 10.700A5.500 5.500 0 1 1 11.100 10.700z" fill="#c9c9c9"/><path d="M6.500 8.300L4.600 4.700" stroke="#2b2e34" stroke-width="1.100"/><circle cx="6.500" cy="8.400" r="1" fill="#2b2e34"/><circle cx="2.8" cy="8.3" r=".65" fill="#2b2e34"/><circle cx="3.5" cy="5.6" r=".65" fill="#2b2e34"/><circle cx="6.5" cy="3.9" r=".65" fill="#2b2e34"/><circle cx="9.5" cy="5.6" r=".65" fill="#2b2e34"/><circle cx="10.2" cy="8.3" r=".65" fill="#2b2e34"/></svg></div>
<div class="si" style="top:102.4px"><svg viewBox="0 0 13 13"><path d="M6.500 1.500L12 4.200 6.500 6.900 1 4.200z" fill="#c9c9c9"/><path d="M6.500 2.900L9.300 4.200 6.500 5.500 3.700 4.200z" fill="#2b2e34"/><path d="M1.300 6.600L6.500 9.100 11.700 6.600M1.300 8.900L6.500 11.400 11.700 8.900" fill="none" stroke="#c9c9c9" stroke-width="1.150"/></svg></div>
<div class="si" style="top:135.4px"><svg viewBox="0 0 13 13"><rect x="1.100" y="1.600" width="10.800" height="9.800" rx="2" fill="#c9c9c9"/><rect x="2.500" y="2.900" width="4" height="3.600" fill="#2b2e34"/><rect x="6.500" y="6.500" width="4" height="3.600" fill="#2b2e34"/></svg></div>
<div class="si" style="top:167.5px"><svg viewBox="0 0 13 13"><path d="M6.500 .9L9.200 4.200H3.800zM6.500 12.100L9.200 8.800H3.800zM.9 6.500L4.200 3.800V9.200zM12.100 6.500L8.800 3.800V9.200z" fill="#c9c9c9"/><path d="M6.500 4L9 6.500 6.500 9 4 6.500z" fill="#c9c9c9"/><circle cx="6.500" cy="6.500" r=".9" fill="#2b2e34"/></svg></div>
<div class="si" style="top:201.0px"><svg viewBox="0 0 13 13"><circle cx="5.300" cy="5.500" r="3.300" fill="none" stroke="#c9c9c9" stroke-width="1.700"/><path d="M7.900 8.100L11.300 11.300" stroke="#c9c9c9" stroke-width="1.900" stroke-linecap="round"/></svg></div>
<div class="si" style="top:232.4px"><svg viewBox="0 0 13 13"><path d="M3.200 3.400A4.300 4.300 0 1 1 2.700 8.700" fill="none" stroke="#c9c9c9" stroke-width="1.800"/><path d="M1 1.600L1.400 5.600 5.200 4.600z" fill="#c9c9c9"/><path d="M6.700 4.300V6.900H4.900" fill="none" stroke="#c9c9c9" stroke-width="1.100"/></svg></div>
<div class="si" style="top:264.5px"><svg viewBox="0 0 13 13"><path d="M2 1.600H11V2.800L7.600 6.600V10.600L5.500 12V6.600L2 2.800z" fill="#c9c9c9"/></svg></div>
<div class="si" style="top:298.3px"><svg viewBox="0 0 13 13"><path d="M1.100 .8H11.900V6.300C11.900 9.400 9.400 11.400 6.500 12.600 3.600 11.400 1.100 9.400 1.100 6.300z" fill="#c9c9c9"/><path d="M6.500 2.200H10.500V6.300C10.500 8.600 8.700 10.100 6.500 11.100z" fill="#2b2e34"/></svg></div>
<div class="si" style="top:329.8px"><svg viewBox="0 0 13 13"><rect x="1.100" y="1.6" width="10.800" height="2.500" rx="1.200" fill="#fff"/><circle cx="10.200" cy="2.9" r=".8" fill="#2e9db6"/><rect x="1.100" y="5.2" width="10.800" height="2.500" rx="1.200" fill="#fff"/><circle cx="10.200" cy="6.5" r=".8" fill="#2e9db6"/><rect x="1.100" y="8.8" width="10.800" height="2.500" rx="1.200" fill="#fff"/><circle cx="10.200" cy="10.1" r=".8" fill="#2e9db6"/><rect x="6.500" y="5.800" width="2.300" height="1.300" fill="#2e9db6" opacity=".6"/></svg></div>
<div class="si" style="top:362.3px"><svg viewBox="0 0 13 13"><rect x="1.600" y="2.300" width="9.800" height="6.800" rx="1" fill="none" stroke="#c9c9c9" stroke-width="1.200"/><path d="M4.300 10.900H8.700" stroke="#c9c9c9" stroke-width="1"/><path d="M5.500 9.300H7.500V10.600H5.500z" fill="#c9c9c9"/></svg></div>
<div class="si" style="top:394.4px"><svg viewBox="0 0 13 13"><circle cx="6.500" cy="6.500" r="5.400" fill="#c9c9c9"/><rect x="5.700" y="3.100" width="1.600" height="4.300" fill="#2b2e34"/><rect x="5.700" y="8.300" width="1.600" height="1.600" fill="#2b2e34"/></svg></div>
<div class="si" style="top:427.2px"><svg viewBox="0 0 13 13"><path d="M10.300 7.300V10.700A.9 .9 0 0 1 9.400 11.600H2.400A.9 .9 0 0 1 1.500 10.700V4.200A.9 .9 0 0 1 2.400 3.300H6.300" fill="none" stroke="#c9c9c9" stroke-width="1.200"/><path d="M4.800 8.800L5.300 6.500 10.300 1.500 12.100 3.300 7.100 8.300z" fill="#c9c9c9"/><path d="M6 7L9.800 3.200" stroke="#2b2e34" stroke-width=".6"/></svg></div>
<div class="si" style="top:460.5px"><svg viewBox="0 0 13 13"><path d="M1.600 3V10.300H11.800" fill="none" stroke="#c9c9c9" stroke-width="1.100"/><rect x="3.300" y="6.500" width="1.500" height="2.700" fill="#c9c9c9"/><rect x="5.500" y="4.800" width="1.500" height="4.400" fill="#c9c9c9"/><rect x="7.700" y="5.800" width="1.500" height="3.400" fill="#c9c9c9"/><rect x="9.900" y="3.300" width="1.500" height="5.900" fill="#c9c9c9"/></svg></div>
<div class="si" style="top:491.8px"><svg viewBox="0 0 13 13"><circle cx="6.500" cy="6.500" r="5.400" fill="#c9c9c9"/><path d="M4.600 2.600C5.400 3.200 6.200 3.300 7 3.200 7.700 3.300 7.600 4.200 7 4.600 6.300 5 5.800 5.800 6.200 6.600 5.500 6.600 4.700 6 4.500 5.200 4.300 4.300 4.200 3.400 4.600 2.600zM8.600 8.800C9.200 8.500 9.700 8.800 9.700 9.400 9.300 10 8.800 10.100 8.500 9.700z" fill="#2b2e34"/></svg></div>
<div id="pop"><div id="pin">
<div id="pbar"></div><div id="pgloss"></div><div style="left:820px;top:203px;width:264px;height:18.500px;background:linear-gradient(90deg,rgba(255,255,255,0),rgba(255,255,255,.035) 60%,rgba(255,255,255,.045))"></div>
<div style="left:156.500px;top:206.500px;width:10px;height:10px"><svg viewBox="0 0 10 10" width="10" height="10" style="display:block"><path d="M.2 .4C3.500 .6 6.500 2 9.900 4.600 7 6.600 4 8.200 .8 9.600z" fill="#1f6fd0"/><path d="M1.500 1.600L1.800 8.300M1.700 2C3.800 1.800 5.600 2.700 5.500 3.900 5.400 5 3.800 5.600 1.900 5.500" fill="none" stroke="#fff" stroke-width="1.250"/></svg></div>
<span class="a" style="left:169.50px;transform:scaleX(0.901);top:206.700px;height:12px;line-height:12px;color:#969696;font-size:8px;white-space:pre">PLURA-XDR Cloud SECaaS Platform - Chrome</span>
<div style="left:157.500px;top:224.200px;width:14px;height:14px;border-radius:7px;background:#3b3b3b"></div>
<div style="left:161px;top:228.200px;width:7px;height:6px"><svg viewBox="0 0 7 6" width="7" height="6" style="display:block"><path d="M0 1.300H3M4.800 1.300H7M0 4.700H2.200M4 4.700H7" stroke="#ddd" stroke-width=".9"/><circle cx="4" cy="1.300" r=".9" fill="none" stroke="#ddd" stroke-width=".7"/><circle cx="3" cy="4.700" r=".9" fill="none" stroke="#ddd" stroke-width=".7"/></svg></div>
<span class="a" style="left:177.00px;transform:scaleX(0.986);top:225.100px;height:12px;line-height:12px;color:#ededed;font-size:9px;white-space:pre">plura.io/tools/diffchecker?type=forensic</span>
<div style="left:1010px;top:203px;width:74px;height:18px"><svg viewBox="0 0 74 18" width="74" height="18" style="display:block"><path d="M1.500 9.500H7.500" stroke="#7a7a7a" stroke-width="1"/><rect x="29.800" y="5.800" width="5.600" height="5.600" rx="1" fill="none" stroke="#969696" stroke-width="1"/><path d="M57.500 6L63.500 12M63.500 6L57.500 12" stroke="#a2a2a2" stroke-width="1"/></svg></div>
<div id="phead"></div><div id="pexp"></div>
<div style="left:166.700px;top:275.800px;width:30.600px;height:23.900px;background:#dbedff"></div>
<div style="left:616px;top:275.800px;width:30.400px;height:23.900px;background:#dbedff;display:none"></div>
<div style="left:166.500px;top:244px;width:1px;height:370px;background:#e9ebee"></div>
<div style="left:615.700px;top:247.500px;width:1px;height:28.300px;background:#e9ebee"></div>
<div style="left:1065px;top:244px;width:1px;height:32px;background:#eceef0"></div>
<span class="a" style="left:173.00px;transform:scaleX(0.906);top:255.700px;height:12px;line-height:12px;color:#24292e;font-size:8.200px;font-weight:bold;white-space:pre;-webkit-text-stroke:.2px">Original text</span>
<span class="a" style="left:622.30px;transform:scaleX(0.862);top:255.700px;height:12px;line-height:12px;color:#24292e;font-size:8.200px;font-weight:bold;white-space:pre;-webkit-text-stroke:.2px">Changed text</span>
<span class="a" style="left:212.50px;transform:scaleX(0.889);top:281.800px;height:12px;line-height:12px;color:#1f3f63;font-size:8px;white-space:pre;text-decoration:underline;text-decoration-color:#3aa3b5">Expand 20 lines ...</span>
<div class="sd"><div class="r" style="top:299.70px;height:15.25px;line-height:15.25px"><span class="a bg"></span><span class="a g"></span><span class="a n">21</span><span class="a" style="left:212.50px;transform:scaleX(0.891);opacity:.55">--------------------------------------------------------------------------------</span></div>
<div class="r" style="top:314.95px;height:15.25px;line-height:15.25px"><span class="a bg"></span><span class="a g"></span><span class="a n">22</span><span class="a" style="left:212.50px;transform:scaleX(0.885)">Chain INPUT (policy ACCEPT 0 packets, 0 bytes)</span></div>
<div class="r" style="top:330.20px;height:15.25px;line-height:15.25px"><span class="a bg"></span><span class="a g"></span><span class="a n">23</span><span class="a" style="left:214.50px;transform:scaleX(0.924)">pkts bytes target</span><span class="a" style="left:278.25px;transform:scaleX(0.977)">prot opt in</span><span class="a" style="left:322.50px;transform:scaleX(1.011)">out</span><span class="a" style="left:343.00px;transform:scaleX(0.916)">source</span><span class="a" style="left:393.00px;transform:scaleX(0.956)">destination</span></div>
<div class="r del" style="top:345.45px;height:17.80px;line-height:17.80px"><span class="a bg"></span><span class="a g"></span><span class="a n">24</span><span class="a mk" style="left:203.2px">-</span><span class="a hl" style="left:214.50px;width:18.50px"></span><span class="a hl" style="left:236.25px;width:19.25px"></span><span class="a" style="left:216.25px;transform:scaleX(0.870)">359K</span><span class="a" style="left:237.50px;transform:scaleX(0.849)">221M</span><span class="a" style="left:258.75px;transform:scaleX(0.793)">ACCEPT</span><span class="a" style="left:294.25px;transform:scaleX(0.948)">all</span><span class="a" style="left:305.95px;transform:scaleX(0.807)">--</span><span class="a" style="left:315.15px;transform:scaleX(0.870)">*</span><span class="a" style="left:329.65px;transform:scaleX(0.870)">*</span><span class="a" style="left:345.15px;transform:scaleX(0.902)">0.0.0.0/0</span><span class="a" style="left:395.75px;transform:scaleX(0.902)">0.0.0.0/0</span><span class="a" style="left:446.35px;transform:scaleX(0.845)">ctstate RELATED,ESTABLISHED</span></div>
<div class="r" style="top:363.25px;height:15.25px;line-height:15.25px"><span class="a bg"></span><span class="a g"></span><span class="a n">25</span><span class="a" style="left:218.00px;transform:scaleX(0.870)">24</span><span class="a" style="left:231.25px;transform:scaleX(0.880)">925</span><span class="a" style="left:245.00px;transform:scaleX(0.793)">ACCEPT</span><span class="a" style="left:280.50px;transform:scaleX(0.948)">all</span><span class="a" style="left:292.20px;transform:scaleX(0.807)">--</span><span class="a" style="left:300.60px;transform:scaleX(0.994)">lo</span><span class="a" style="left:316.50px;transform:scaleX(0.870)">*</span><span class="a" style="left:332.50px;transform:scaleX(0.902)">0.0.0.0/0</span><span class="a" style="left:383.00px;transform:scaleX(0.902)">0.0.0.0/0</span></div>
<div class="r del" style="top:378.50px;height:17.80px;line-height:17.80px"><span class="a bg"></span><span class="a g"></span><span class="a n">26</span><span class="a mk" style="left:203.2px">-</span><span class="a hl" style="left:212.50px;width:21.25px"></span><span class="a hl" style="left:236.75px;width:22.50px"></span><span class="a" style="left:213.75px;transform:scaleX(0.865)">28200</span><span class="a" style="left:238.00px;transform:scaleX(0.875)">8572K</span><span class="a" style="left:262.50px;transform:scaleX(0.911)">INPUT_direct</span><span class="a" style="left:310.00px;transform:scaleX(0.948)">all</span><span class="a" style="left:321.70px;transform:scaleX(0.807)">--</span><span class="a" style="left:330.90px;transform:scaleX(0.870)">*</span><span class="a" style="left:345.40px;transform:scaleX(0.870)">*</span><span class="a" style="left:360.90px;transform:scaleX(0.902)">0.0.0.0/0</span><span class="a" style="left:411.50px;transform:scaleX(0.902)">0.0.0.0/0</span></div>
<div class="r del" style="top:396.30px;height:17.80px;line-height:17.80px"><span class="a bg"></span><span class="a g"></span><span class="a n">27</span><span class="a mk" style="left:203.2px">-</span><span class="a hl" style="left:212.50px;width:21.25px"></span><span class="a hl" style="left:236.75px;width:22.50px"></span><span class="a" style="left:213.75px;transform:scaleX(0.865)">28200</span><span class="a" style="left:238.00px;transform:scaleX(0.875)">8572K</span><span class="a" style="left:262.50px;transform:scaleX(0.837)">INPUT_ZONES_SOURCE</span><span class="a" style="left:346.25px;transform:scaleX(0.948)">all</span><span class="a" style="left:357.95px;transform:scaleX(0.807)">--</span><span class="a" style="left:367.15px;transform:scaleX(0.870)">*</span><span class="a" style="left:381.65px;transform:scaleX(0.870)">*</span><span class="a" style="left:397.15px;transform:scaleX(0.902)">0.0.0.0/0</span><span class="a" style="left:447.75px;transform:scaleX(0.902)">0.0.0.0/0</span></div>
<div class="r del" style="top:414.10px;height:17.80px;line-height:17.80px"><span class="a bg"></span><span class="a g"></span><span class="a n">28</span><span class="a mk" style="left:203.2px">-</span><span class="a hl" style="left:212.50px;width:21.25px"></span><span class="a hl" style="left:236.75px;width:22.50px"></span><span class="a" style="left:213.75px;transform:scaleX(0.865)">28200</span><span class="a" style="left:238.00px;transform:scaleX(0.875)">8572K</span><span class="a" style="left:262.50px;transform:scaleX(0.848)">INPUT_ZONES</span><span class="a" style="left:314.25px;transform:scaleX(0.948)">all</span><span class="a" style="left:325.95px;transform:scaleX(0.807)">--</span><span class="a" style="left:335.15px;transform:scaleX(0.870)">*</span><span class="a" style="left:349.65px;transform:scaleX(0.870)">*</span><span class="a" style="left:365.15px;transform:scaleX(0.902)">0.0.0.0/0</span><span class="a" style="left:415.75px;transform:scaleX(0.902)">0.0.0.0/0</span></div>
<div class="r del" style="top:431.90px;height:17.80px;line-height:17.80px"><span class="a bg"></span><span class="a g"></span><span class="a n">29</span><span class="a mk" style="left:203.2px">-</span><span class="a hl" style="left:214.50px;width:10.50px"></span><span class="a hl" style="left:228.00px;width:17.00px"></span><span class="a" style="left:216.25px;transform:scaleX(0.898)">99</span><span class="a" style="left:229.50px;transform:scaleX(0.829)">3960</span><span class="a" style="left:248.75px;transform:scaleX(0.832)">DROP</span><span class="a" style="left:280.75px;transform:scaleX(0.948)">all</span><span class="a" style="left:292.45px;transform:scaleX(0.807)">--</span><span class="a" style="left:301.65px;transform:scaleX(0.870)">*</span><span class="a" style="left:316.15px;transform:scaleX(0.870)">*</span><span class="a" style="left:331.65px;transform:scaleX(0.902)">0.0.0.0/0</span><span class="a" style="left:382.25px;transform:scaleX(0.902)">0.0.0.0/0</span><span class="a" style="left:432.85px;transform:scaleX(0.888)">ctstate INVALID</span></div>
<div class="r del" style="top:449.70px;height:17.80px;line-height:17.80px"><span class="a bg"></span><span class="a g"></span><span class="a n">30</span><span class="a mk" style="left:203.2px">-</span><span class="a hl" style="left:212.50px;width:21.25px"></span><span class="a hl" style="left:236.75px;width:22.50px"></span><span class="a" style="left:213.75px;transform:scaleX(0.865)">28097</span><span class="a" style="left:238.00px;transform:scaleX(0.875)">8567K</span><span class="a" style="left:262.50px;transform:scaleX(0.803)">REJECT</span><span class="a" style="left:297.00px;transform:scaleX(0.948)">all</span><span class="a" style="left:308.70px;transform:scaleX(0.807)">--</span><span class="a" style="left:317.90px;transform:scaleX(0.870)">*</span><span class="a" style="left:332.40px;transform:scaleX(0.870)">*</span><span class="a" style="left:347.90px;transform:scaleX(0.902)">0.0.0.0/0</span><span class="a" style="left:398.50px;transform:scaleX(0.902)">0.0.0.0/0</span><span class="a" style="left:449.10px;transform:scaleX(0.963)">reject-with icmp-host-prohibited</span></div>
<div class="r emp" style="top:467.50px;height:15.25px;line-height:15.25px"><span class="a bg"></span><span class="a g"></span><span class="a n">31</span></div>
<div class="r" style="top:482.75px;height:15.25px;line-height:15.25px"><span class="a bg"></span><span class="a g"></span><span class="a n">32</span><span class="a" style="left:212.50px;transform:scaleX(0.871)">Chain FORWARD (policy ACCEPT 0 packets, 0 bytes)</span></div>
<div class="r" style="top:498.00px;height:15.25px;line-height:15.25px"><span class="a bg"></span><span class="a g"></span><span class="a n">33</span><span class="a" style="left:214.50px;transform:scaleX(0.924)">pkts bytes target</span><span class="a" style="left:278.25px;transform:scaleX(0.977)">prot opt in</span><span class="a" style="left:322.50px;transform:scaleX(1.011)">out</span><span class="a" style="left:343.00px;transform:scaleX(0.916)">source</span><span class="a" style="left:393.00px;transform:scaleX(0.956)">destination</span></div>
<div class="r" style="top:513.25px;height:15.25px;line-height:15.25px"><span class="a bg"></span><span class="a g"></span><span class="a n">34</span><span class="a" style="left:220.00px;transform:scaleX(0.842)">0</span><span class="a" style="left:233.00px;transform:scaleX(0.876)">0</span><span class="a" style="left:238.75px;transform:scaleX(0.786)">ACCEPT</span><span class="a" style="left:274.25px;transform:scaleX(0.948)">all</span><span class="a" style="left:285.95px;transform:scaleX(0.807)">--</span><span class="a" style="left:295.15px;transform:scaleX(0.870)">*</span><span class="a" style="left:309.65px;transform:scaleX(0.870)">*</span><span class="a" style="left:325.15px;transform:scaleX(0.902)">0.0.0.0/0</span><span class="a" style="left:375.75px;transform:scaleX(0.902)">0.0.0.0/0</span><span class="a" style="left:426.35px;transform:scaleX(0.841)">ctstate RELATED,ESTABLISHED</span></div>
<div class="r" style="top:528.50px;height:15.25px;line-height:15.25px"><span class="a bg"></span><span class="a g"></span><span class="a n">35</span><span class="a" style="left:220.00px;transform:scaleX(0.842)">0</span><span class="a" style="left:233.00px;transform:scaleX(0.876)">0</span><span class="a" style="left:238.75px;transform:scaleX(0.786)">ACCEPT</span><span class="a" style="left:274.25px;transform:scaleX(0.948)">all</span><span class="a" style="left:285.95px;transform:scaleX(0.807)">--</span><span class="a" style="left:294.35px;transform:scaleX(0.994)">lo</span><span class="a" style="left:310.25px;transform:scaleX(0.870)">*</span><span class="a" style="left:326.25px;transform:scaleX(0.902)">0.0.0.0/0</span><span class="a" style="left:376.75px;transform:scaleX(0.902)">0.0.0.0/0</span></div>
<div class="r" style="top:543.75px;height:15.25px;line-height:15.25px"><span class="a bg"></span><span class="a g"></span><span class="a n">36</span><span class="a" style="left:220.00px;transform:scaleX(0.842)">0</span><span class="a" style="left:233.00px;transform:scaleX(0.876)">0</span><span class="a" style="left:239.25px;transform:scaleX(0.859)">FORWARD_direct</span><span class="a" style="left:299.50px;transform:scaleX(0.948)">all</span><span class="a" style="left:311.20px;transform:scaleX(0.807)">--</span><span class="a" style="left:320.40px;transform:scaleX(0.870)">*</span><span class="a" style="left:334.90px;transform:scaleX(0.870)">*</span><span class="a" style="left:350.40px;transform:scaleX(0.902)">0.0.0.0/0</span><span class="a" style="left:401.00px;transform:scaleX(0.902)">0.0.0.0/0</span></div>
<div class="r" style="top:559.00px;height:15.25px;line-height:15.25px"><span class="a bg"></span><span class="a g"></span><span class="a n">37</span><span class="a" style="left:220.00px;transform:scaleX(0.842)">0</span><span class="a" style="left:233.00px;transform:scaleX(0.876)">0</span><span class="a" style="left:239.25px;transform:scaleX(0.826)">FORWARD_IN_ZONES_SOURCE</span><span class="a" style="left:346.25px;transform:scaleX(0.948)">all</span><span class="a" style="left:357.95px;transform:scaleX(0.807)">--</span><span class="a" style="left:367.15px;transform:scaleX(0.870)">*</span><span class="a" style="left:381.65px;transform:scaleX(0.870)">*</span><span class="a" style="left:397.15px;transform:scaleX(0.902)">0.0.0.0/0</span><span class="a" style="left:447.75px;transform:scaleX(0.902)">0.0.0.0/0</span></div>
<div class="r" style="top:574.25px;height:15.25px;line-height:15.25px"><span class="a bg"></span><span class="a g"></span><span class="a n">38</span><span class="a" style="left:220.00px;transform:scaleX(0.842)">0</span><span class="a" style="left:233.00px;transform:scaleX(0.876)">0</span><span class="a" style="left:239.25px;transform:scaleX(0.829)">FORWARD_IN_ZONES</span><span class="a" style="left:314.25px;transform:scaleX(0.948)">all</span><span class="a" style="left:325.95px;transform:scaleX(0.807)">--</span><span class="a" style="left:335.15px;transform:scaleX(0.870)">*</span><span class="a" style="left:349.65px;transform:scaleX(0.870)">*</span><span class="a" style="left:365.15px;transform:scaleX(0.902)">0.0.0.0/0</span><span class="a" style="left:415.75px;transform:scaleX(0.902)">0.0.0.0/0</span></div>
<div class="r del" style="top:589.50px;height:17.80px;line-height:17.80px"><span class="a bg"></span><span class="a g"></span><span class="a n">44</span><span class="a mk" style="left:203.2px">-</span><span class="a hl" style="left:317.50px;width:18.25px"></span><span class="a hl" style="left:369.25px;width:16.25px"></span><span class="a" style="left:213.75px;transform:scaleX(0.866)">Chain OUTPUT (policy ACCEPT</span><span class="a" style="left:319.25px;transform:scaleX(0.843)">460K</span><span class="a" style="left:339.50px;transform:scaleX(0.881)">packets,</span><span class="a" style="left:370.75px;transform:scaleX(0.884)">61M</span><span class="a" style="left:388.75px;transform:scaleX(0.895)">bytes)</span></div></div>
<div class="sd" style="left:449.800px"><div class="r" style="top:299.70px;height:15.25px;line-height:15.25px"><span class="a bg"></span><span class="a g"></span><span class="a n">21</span><span class="a" style="left:212.50px;transform:scaleX(0.891);opacity:.55">--------------------------------------------------------------------------------</span></div>
<div class="r" style="top:314.95px;height:15.25px;line-height:15.25px"><span class="a bg"></span><span class="a g"></span><span class="a n">22</span><span class="a" style="left:212.50px;transform:scaleX(0.885)">Chain INPUT (policy ACCEPT 0 packets, 0 bytes)</span></div>
<div class="r" style="top:330.20px;height:15.25px;line-height:15.25px"><span class="a bg"></span><span class="a g"></span><span class="a n">23</span><span class="a" style="left:214.50px;transform:scaleX(0.924)">pkts bytes target</span><span class="a" style="left:278.25px;transform:scaleX(0.977)">prot opt in</span><span class="a" style="left:322.50px;transform:scaleX(1.011)">out</span><span class="a" style="left:343.00px;transform:scaleX(0.916)">source</span><span class="a" style="left:393.00px;transform:scaleX(0.956)">destination</span></div>
<div class="r add" style="top:345.45px;height:17.80px;line-height:17.80px"><span class="a bg"></span><span class="a g"></span><span class="a n">24</span><span class="a mk" style="left:203.2px">+</span><span class="a hl" style="left:214.50px;width:18.50px"></span><span class="a hl" style="left:236.25px;width:19.25px"></span><span class="a" style="left:216.25px;transform:scaleX(0.870)">363K</span><span class="a" style="left:237.50px;transform:scaleX(0.849)">223M</span><span class="a" style="left:258.75px;transform:scaleX(0.793)">ACCEPT</span><span class="a" style="left:294.25px;transform:scaleX(0.948)">all</span><span class="a" style="left:305.95px;transform:scaleX(0.807)">--</span><span class="a" style="left:315.15px;transform:scaleX(0.870)">*</span><span class="a" style="left:329.65px;transform:scaleX(0.870)">*</span><span class="a" style="left:345.15px;transform:scaleX(0.902)">0.0.0.0/0</span><span class="a" style="left:395.75px;transform:scaleX(0.902)">0.0.0.0/0</span><span class="a" style="left:446.35px;transform:scaleX(0.845)">ctstate RELATED,ESTABLISHED</span></div>
<div class="r" style="top:363.25px;height:15.25px;line-height:15.25px"><span class="a bg"></span><span class="a g"></span><span class="a n">25</span><span class="a" style="left:218.00px;transform:scaleX(0.870)">24</span><span class="a" style="left:231.25px;transform:scaleX(0.880)">925</span><span class="a" style="left:245.00px;transform:scaleX(0.793)">ACCEPT</span><span class="a" style="left:280.50px;transform:scaleX(0.948)">all</span><span class="a" style="left:292.20px;transform:scaleX(0.807)">--</span><span class="a" style="left:300.60px;transform:scaleX(0.994)">lo</span><span class="a" style="left:316.50px;transform:scaleX(0.870)">*</span><span class="a" style="left:332.50px;transform:scaleX(0.902)">0.0.0.0/0</span><span class="a" style="left:383.00px;transform:scaleX(0.902)">0.0.0.0/0</span></div>
<div class="r add" style="top:378.50px;height:17.80px;line-height:17.80px"><span class="a bg"></span><span class="a g"></span><span class="a n">26</span><span class="a mk" style="left:203.2px">+</span><span class="a hl" style="left:212.50px;width:21.25px"></span><span class="a hl" style="left:236.75px;width:22.50px"></span><span class="a" style="left:213.75px;transform:scaleX(0.865)">28475</span><span class="a" style="left:238.00px;transform:scaleX(0.875)">8656K</span><span class="a" style="left:262.50px;transform:scaleX(0.911)">INPUT_direct</span><span class="a" style="left:310.00px;transform:scaleX(0.948)">all</span><span class="a" style="left:321.70px;transform:scaleX(0.807)">--</span><span class="a" style="left:330.90px;transform:scaleX(0.870)">*</span><span class="a" style="left:345.40px;transform:scaleX(0.870)">*</span><span class="a" style="left:360.90px;transform:scaleX(0.902)">0.0.0.0/0</span><span class="a" style="left:411.50px;transform:scaleX(0.902)">0.0.0.0/0</span></div>
<div class="r add" style="top:396.30px;height:17.80px;line-height:17.80px"><span class="a bg"></span><span class="a g"></span><span class="a n">27</span><span class="a mk" style="left:203.2px">+</span><span class="a hl" style="left:212.50px;width:21.25px"></span><span class="a hl" style="left:236.75px;width:22.50px"></span><span class="a" style="left:213.75px;transform:scaleX(0.865)">28475</span><span class="a" style="left:238.00px;transform:scaleX(0.875)">8656K</span><span class="a" style="left:262.50px;transform:scaleX(0.837)">INPUT_ZONES_SOURCE</span><span class="a" style="left:346.25px;transform:scaleX(0.948)">all</span><span class="a" style="left:357.95px;transform:scaleX(0.807)">--</span><span class="a" style="left:367.15px;transform:scaleX(0.870)">*</span><span class="a" style="left:381.65px;transform:scaleX(0.870)">*</span><span class="a" style="left:397.15px;transform:scaleX(0.902)">0.0.0.0/0</span><span class="a" style="left:447.75px;transform:scaleX(0.902)">0.0.0.0/0</span></div>
<div class="r add" style="top:414.10px;height:17.80px;line-height:17.80px"><span class="a bg"></span><span class="a g"></span><span class="a n">28</span><span class="a mk" style="left:203.2px">+</span><span class="a hl" style="left:212.50px;width:21.25px"></span><span class="a hl" style="left:236.75px;width:22.50px"></span><span class="a" style="left:213.75px;transform:scaleX(0.865)">28475</span><span class="a" style="left:238.00px;transform:scaleX(0.875)">8656K</span><span class="a" style="left:262.50px;transform:scaleX(0.848)">INPUT_ZONES</span><span class="a" style="left:314.25px;transform:scaleX(0.948)">all</span><span class="a" style="left:325.95px;transform:scaleX(0.807)">--</span><span class="a" style="left:335.15px;transform:scaleX(0.870)">*</span><span class="a" style="left:349.65px;transform:scaleX(0.870)">*</span><span class="a" style="left:365.15px;transform:scaleX(0.902)">0.0.0.0/0</span><span class="a" style="left:415.75px;transform:scaleX(0.902)">0.0.0.0/0</span></div>
<div class="r add" style="top:431.90px;height:17.80px;line-height:17.80px"><span class="a bg"></span><span class="a g"></span><span class="a n">29</span><span class="a mk" style="left:203.2px">+</span><span class="a hl" style="left:215.50px;width:13.75px"></span><span class="a hl" style="left:231.75px;width:17.50px"></span><span class="a" style="left:217.00px;transform:scaleX(0.823)">100</span><span class="a" style="left:233.00px;transform:scaleX(0.843)">4000</span><span class="a" style="left:253.00px;transform:scaleX(0.811)">DROP</span><span class="a" style="left:285.00px;transform:scaleX(0.948)">all</span><span class="a" style="left:296.70px;transform:scaleX(0.807)">--</span><span class="a" style="left:305.90px;transform:scaleX(0.870)">*</span><span class="a" style="left:320.40px;transform:scaleX(0.870)">*</span><span class="a" style="left:335.90px;transform:scaleX(0.902)">0.0.0.0/0</span><span class="a" style="left:386.50px;transform:scaleX(0.902)">0.0.0.0/0</span><span class="a" style="left:437.10px;transform:scaleX(0.888)">ctstate INVALID</span></div>
<div class="r add" style="top:449.70px;height:17.80px;line-height:17.80px"><span class="a bg"></span><span class="a g"></span><span class="a n">30</span><span class="a mk" style="left:203.2px">+</span><span class="a hl" style="left:212.50px;width:21.25px"></span><span class="a hl" style="left:236.75px;width:22.50px"></span><span class="a" style="left:213.75px;transform:scaleX(0.865)">28370</span><span class="a" style="left:238.00px;transform:scaleX(0.875)">8652K</span><span class="a" style="left:262.50px;transform:scaleX(0.803)">REJECT</span><span class="a" style="left:297.00px;transform:scaleX(0.948)">all</span><span class="a" style="left:308.70px;transform:scaleX(0.807)">--</span><span class="a" style="left:317.90px;transform:scaleX(0.870)">*</span><span class="a" style="left:332.40px;transform:scaleX(0.870)">*</span><span class="a" style="left:347.90px;transform:scaleX(0.902)">0.0.0.0/0</span><span class="a" style="left:398.50px;transform:scaleX(0.902)">0.0.0.0/0</span><span class="a" style="left:449.10px;transform:scaleX(0.963)">reject-with icmp-host-prohibited</span></div>
<div class="r emp" style="top:467.50px;height:15.25px;line-height:15.25px"><span class="a bg"></span><span class="a g"></span><span class="a n">31</span></div>
<div class="r" style="top:482.75px;height:15.25px;line-height:15.25px"><span class="a bg"></span><span class="a g"></span><span class="a n">32</span><span class="a" style="left:212.50px;transform:scaleX(0.871)">Chain FORWARD (policy ACCEPT 0 packets, 0 bytes)</span></div>
<div class="r" style="top:498.00px;height:15.25px;line-height:15.25px"><span class="a bg"></span><span class="a g"></span><span class="a n">33</span><span class="a" style="left:214.50px;transform:scaleX(0.924)">pkts bytes target</span><span class="a" style="left:278.25px;transform:scaleX(0.977)">prot opt in</span><span class="a" style="left:322.50px;transform:scaleX(1.011)">out</span><span class="a" style="left:343.00px;transform:scaleX(0.916)">source</span><span class="a" style="left:393.00px;transform:scaleX(0.956)">destination</span></div>
<div class="r" style="top:513.25px;height:15.25px;line-height:15.25px"><span class="a bg"></span><span class="a g"></span><span class="a n">34</span><span class="a" style="left:220.00px;transform:scaleX(0.842)">0</span><span class="a" style="left:233.00px;transform:scaleX(0.876)">0</span><span class="a" style="left:238.75px;transform:scaleX(0.786)">ACCEPT</span><span class="a" style="left:274.25px;transform:scaleX(0.948)">all</span><span class="a" style="left:285.95px;transform:scaleX(0.807)">--</span><span class="a" style="left:295.15px;transform:scaleX(0.870)">*</span><span class="a" style="left:309.65px;transform:scaleX(0.870)">*</span><span class="a" style="left:325.15px;transform:scaleX(0.902)">0.0.0.0/0</span><span class="a" style="left:375.75px;transform:scaleX(0.902)">0.0.0.0/0</span><span class="a" style="left:426.35px;transform:scaleX(0.841)">ctstate RELATED,ESTABLISHED</span></div>
<div class="r" style="top:528.50px;height:15.25px;line-height:15.25px"><span class="a bg"></span><span class="a g"></span><span class="a n">35</span><span class="a" style="left:220.00px;transform:scaleX(0.842)">0</span><span class="a" style="left:233.00px;transform:scaleX(0.876)">0</span><span class="a" style="left:238.75px;transform:scaleX(0.786)">ACCEPT</span><span class="a" style="left:274.25px;transform:scaleX(0.948)">all</span><span class="a" style="left:285.95px;transform:scaleX(0.807)">--</span><span class="a" style="left:294.35px;transform:scaleX(0.994)">lo</span><span class="a" style="left:310.25px;transform:scaleX(0.870)">*</span><span class="a" style="left:326.25px;transform:scaleX(0.902)">0.0.0.0/0</span><span class="a" style="left:376.75px;transform:scaleX(0.902)">0.0.0.0/0</span></div>
<div class="r" style="top:543.75px;height:15.25px;line-height:15.25px"><span class="a bg"></span><span class="a g"></span><span class="a n">36</span><span class="a" style="left:220.00px;transform:scaleX(0.842)">0</span><span class="a" style="left:233.00px;transform:scaleX(0.876)">0</span><span class="a" style="left:239.25px;transform:scaleX(0.859)">FORWARD_direct</span><span class="a" style="left:299.50px;transform:scaleX(0.948)">all</span><span class="a" style="left:311.20px;transform:scaleX(0.807)">--</span><span class="a" style="left:320.40px;transform:scaleX(0.870)">*</span><span class="a" style="left:334.90px;transform:scaleX(0.870)">*</span><span class="a" style="left:350.40px;transform:scaleX(0.902)">0.0.0.0/0</span><span class="a" style="left:401.00px;transform:scaleX(0.902)">0.0.0.0/0</span></div>
<div class="r" style="top:559.00px;height:15.25px;line-height:15.25px"><span class="a bg"></span><span class="a g"></span><span class="a n">37</span><span class="a" style="left:220.00px;transform:scaleX(0.842)">0</span><span class="a" style="left:233.00px;transform:scaleX(0.876)">0</span><span class="a" style="left:239.25px;transform:scaleX(0.826)">FORWARD_IN_ZONES_SOURCE</span><span class="a" style="left:346.25px;transform:scaleX(0.948)">all</span><span class="a" style="left:357.95px;transform:scaleX(0.807)">--</span><span class="a" style="left:367.15px;transform:scaleX(0.870)">*</span><span class="a" style="left:381.65px;transform:scaleX(0.870)">*</span><span class="a" style="left:397.15px;transform:scaleX(0.902)">0.0.0.0/0</span><span class="a" style="left:447.75px;transform:scaleX(0.902)">0.0.0.0/0</span></div>
<div class="r" style="top:574.25px;height:15.25px;line-height:15.25px"><span class="a bg"></span><span class="a g"></span><span class="a n">38</span><span class="a" style="left:220.00px;transform:scaleX(0.842)">0</span><span class="a" style="left:233.00px;transform:scaleX(0.876)">0</span><span class="a" style="left:239.25px;transform:scaleX(0.829)">FORWARD_IN_ZONES</span><span class="a" style="left:314.25px;transform:scaleX(0.948)">all</span><span class="a" style="left:325.95px;transform:scaleX(0.807)">--</span><span class="a" style="left:335.15px;transform:scaleX(0.870)">*</span><span class="a" style="left:349.65px;transform:scaleX(0.870)">*</span><span class="a" style="left:365.15px;transform:scaleX(0.902)">0.0.0.0/0</span><span class="a" style="left:415.75px;transform:scaleX(0.902)">0.0.0.0/0</span></div>
<div class="r add" style="top:589.50px;height:17.80px;line-height:17.80px"><span class="a bg"></span><span class="a g"></span><span class="a n">44</span><span class="a mk" style="left:203.2px">+</span><span class="a hl" style="left:317.50px;width:18.25px"></span><span class="a hl" style="left:369.25px;width:16.25px"></span><span class="a" style="left:213.75px;transform:scaleX(0.866)">Chain OUTPUT (policy ACCEPT</span><span class="a" style="left:319.25px;transform:scaleX(0.843)">465K</span><span class="a" style="left:339.50px;transform:scaleX(0.881)">packets,</span><span class="a" style="left:370.75px;transform:scaleX(0.884)">62M</span><span class="a" style="left:388.75px;transform:scaleX(0.895)">bytes)</span></div></div>
<div style="left:166.700px;top:607.30px;width:898.500px;height:24px;background:#f1f8ff"></div>
<div style="left:166.700px;top:607.30px;width:30.600px;height:24px;background:#dbedff"></div>
<div style="left:1078.300px;top:243.700px;width:6px;height:371px;background:#ebebeb"></div>
<div style="left:1078.300px;top:551px;width:6px;height:64px;background:#bcbcbc"></div>
</div></div>
</div></div>
<div style="position:absolute;left:0;top:0;width:1200px;height:709px;overflow:hidden;z-index:5;pointer-events:none"><div id="gloss"></div></div>
</body></html>
